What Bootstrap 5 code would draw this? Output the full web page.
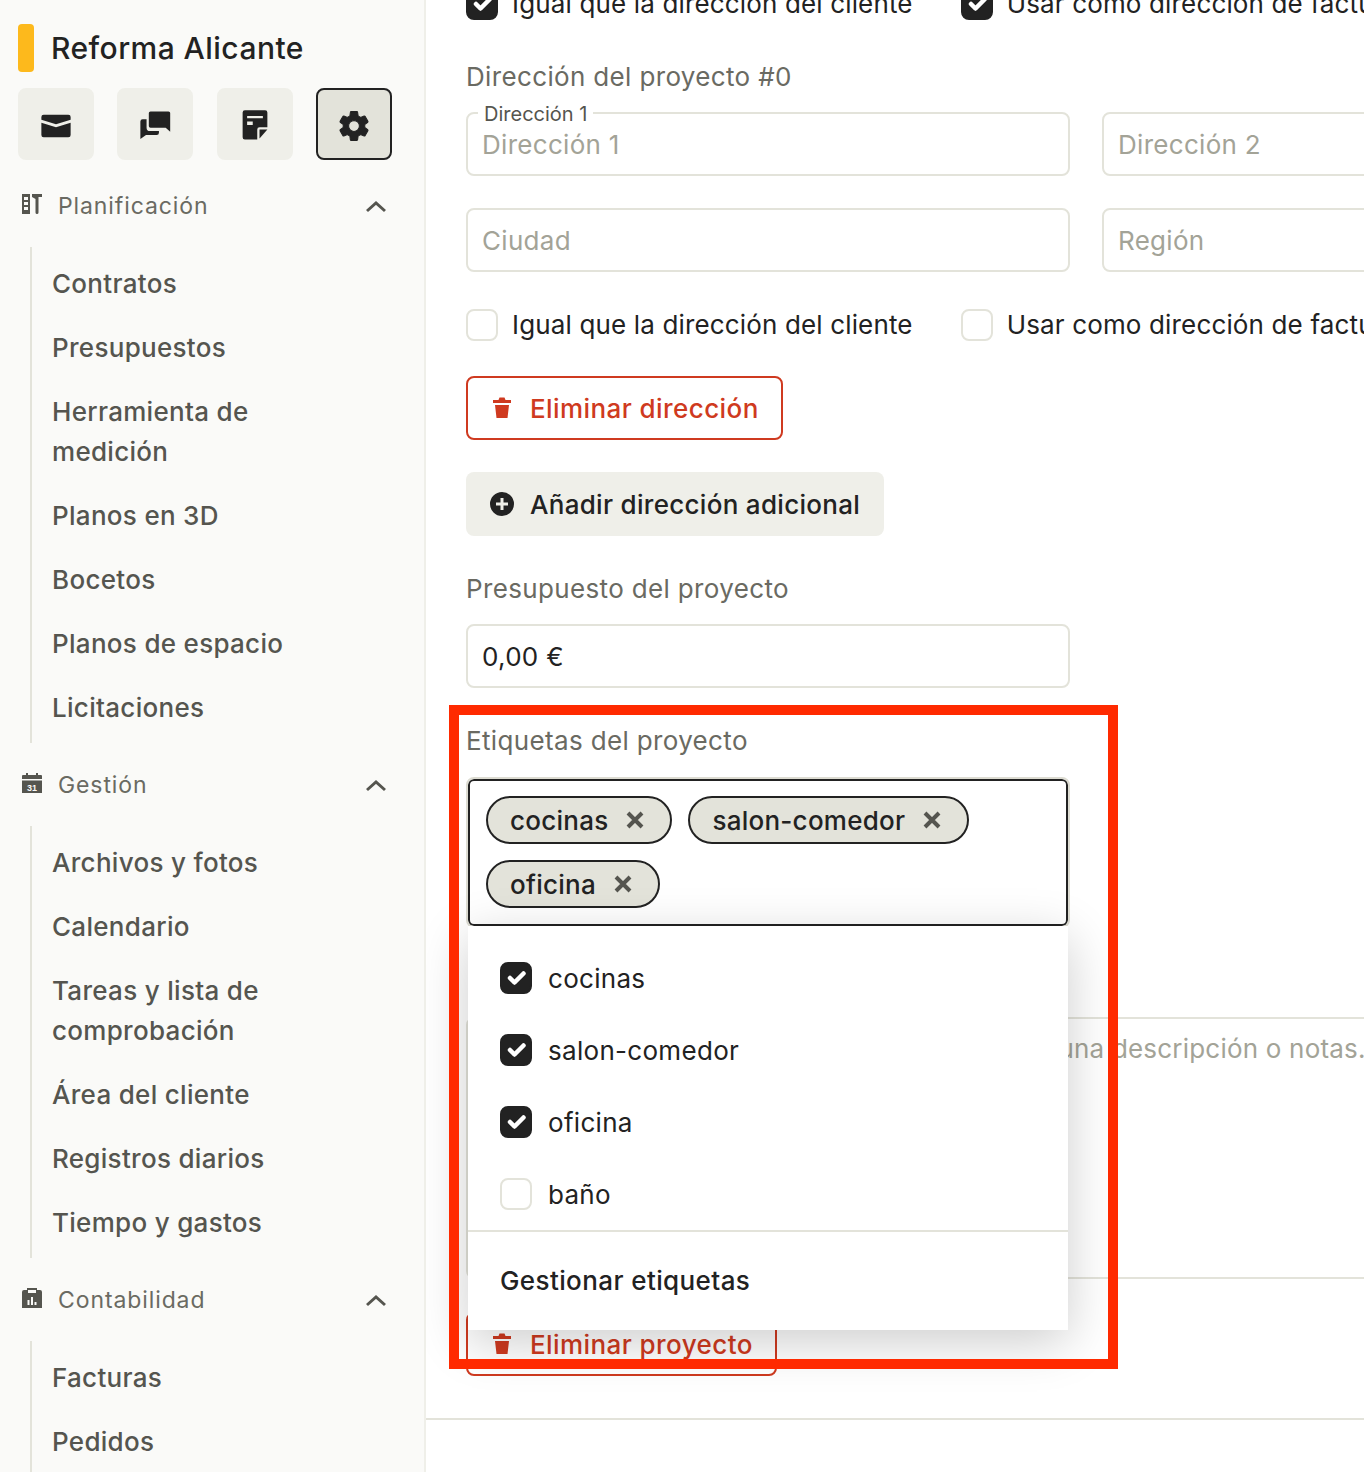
<!doctype html>
<html lang="es"><head><meta charset="utf-8">
<link href="https://cdn.jsdelivr.net/npm/bootstrap@5.3.0/dist/css/bootstrap.min.css" rel="stylesheet">
<style>
html,body{height:1472px;overflow:hidden}
body{font-family:Inter,"Liberation Sans",sans-serif;color:#222;background:#fff;font-size:26px}
.shell{height:1472px;width:1364px;overflow:hidden;position:relative}
.side{width:426px;flex:none;background:#fafaf8;border-right:2px solid #efefe9;padding:24px 32px 0 18px;height:1472px;overflow:hidden}
.prj-bar{width:16px;height:48px;background:#fdb91c;border-radius:4px}
.prj-name{font-size:30px;font-weight:500;line-height:48px;margin-left:17px;letter-spacing:.45px;color:#222}
.tool-row{margin-top:16px}
.tool-btn{width:76px;height:72px;background:#efefe9;border-radius:8px;border:2px solid #efefe9;padding:3px 0 0}
.tool-btn.on{background:#e3e3da;border-color:#222}
.tool-btn svg{width:36px;height:36px;fill:#222}
.sec-head{height:83px;margin-right:-2px;color:#6a6a62;padding-left:4px}
.sec-head svg.ic{width:20px;height:20px;fill:#55554f;margin-right:16px;margin-top:-3px}
.sec-title{font-size:23px;letter-spacing:.9px;color:#6a6a62;font-weight:400;padding-top:2px}
.sec-head svg.ch{width:24px;height:24px;margin-left:auto;margin-right:6px}
.sub-list{margin:0 40px 0 12px;padding:5px 0 3px 20px;border-left:2px solid #e3e3da;list-style:none}
.sub-list li{padding:12px 0;font-size:26px;line-height:40px;font-weight:500;color:#55554f;letter-spacing:.3px}
.main{flex:1;min-width:0;position:relative;overflow:hidden;height:1472px}
.inner{width:1240px;margin:-12px 0 0 40px}
.two{display:grid;grid-template-columns:604px 604px;column-gap:32px}
.chk-row{display:flex;gap:48px;height:32px}
.chk{display:flex;align-items:center;gap:14px;font-size:26px;letter-spacing:.15px;line-height:32px;white-space:nowrap}
.form-check-input.box{width:32px;height:32px;margin:0;border:2px solid #e3e3da;border-radius:8px;flex:none;background-size:30px}
.form-check-input.box:checked{background-color:#222;border-color:#222}
.fld-title{font-size:26px;letter-spacing:.35px;line-height:40px;color:#6a6a62;margin:0}
.form-control.fld{height:64px;font-size:26px;letter-spacing:.3px;border:2px solid #e3e3da;border-radius:8px;padding:0 14px;color:#222;background:#fff}
.form-control.fld::placeholder,.notes::placeholder{color:#a3a397;opacity:1}
.fld-wrap{position:relative}
.fld-float{position:absolute;left:12px;top:-9px;background:#fff;padding:0 6px;font-size:20px;line-height:22px;color:#55554f;z-index:2}
.btn.btn-del{height:64px;border:2px solid #cf3a20;border-radius:8px;color:#cf3a20;background:#fff;font-size:26px;letter-spacing:.42px;font-weight:500;padding:0 22px;display:flex;align-items:center;gap:16px}
.btn.btn-add{height:64px;border:0;border-radius:8px;color:#222;background:#efefe9;font-size:26px;letter-spacing:.3px;font-weight:500;padding:0 24px;display:flex;align-items:center;gap:16px}
.btn svg{width:24px;height:24px;fill:currentColor;flex:none}
.tag-area{width:604px;height:151px;border:2px solid #dddcd2;border-radius:8px;box-shadow:inset 0 0 0 2px #222;padding:17px 18px;display:flex;flex-wrap:wrap;align-content:flex-start;gap:16px;background:#fff}
.tag{height:48px;border:2px solid #222;border-radius:24px;background:#e3e3da;padding:0 26px 0 22px;font-size:26px;letter-spacing:.25px;font-weight:500;display:flex;align-items:center;gap:18px;color:#222}
.tag svg{width:18px;height:18px;stroke:#55554f;stroke-width:4;fill:none}
.notes{display:block;width:1240px;height:262px;margin-top:89px;border:2px solid #e3e3da;border-radius:8px;font-size:26px;letter-spacing:.2px;padding:10px 14px;resize:none;color:#222;outline:0}
.menu-pop{position:absolute;left:42px;top:926px;width:600px;height:404px;background:#fff;box-shadow:0 12px 48px rgba(0,0,0,.2);padding-top:16px;z-index:5}
.pop-item{height:72px;padding-left:32px;display:flex;align-items:center;gap:16px;font-size:26px;letter-spacing:.3px;color:#222}
.pop-foot{border-top:2px solid #e3e3da;height:98px;padding-left:32px;display:flex;align-items:center;font-size:26px;letter-spacing:.4px;font-weight:500;color:#222}
.anno{position:absolute;left:449px;top:705px;width:669px;height:664px;border:10px solid #ff2a00;z-index:9;pointer-events:none}
.rule{border-top:2px solid #e3e3da;position:absolute;left:0;right:0;top:1418px}
</style></head><body>
<div class="shell d-flex">
<aside class="side">
  <div class="d-flex align-items-center"><div class="prj-bar"></div><div class="prj-name">Reforma Alicante</div></div>
  <div class="tool-row d-flex justify-content-between">
    <button class="tool-btn d-flex align-items-center justify-content-center" aria-label="Correo"><svg viewBox="0 0 32 32"><path d="M5 6h22a2 2 0 0 1 2 2v2.500l-13 4-13-4V8a2 2 0 0 1 2-2zM3 13l13 4 13-4v11a2 2 0 0 1-2 2H5a2 2 0 0 1-2-2z"/></svg></button>
    <button class="tool-btn d-flex align-items-center justify-content-center" aria-label="Mensajes"><svg viewBox="0 0 32 32"><path d="M12 3h16a1.500 1.500 0 0 1 1.500 1.500V21l-4-3.500H12A1.500 1.500 0 0 1 10.500 16V4.500A1.500 1.500 0 0 1 12 3z"/><path d="M8.500 10v7.500a3 3 0 0 0 3 3h8V22a2 2 0 0 1-2 2H8l-5 3.500V12a2 2 0 0 1 2-2z"/></svg></button>
    <button class="tool-btn d-flex align-items-center justify-content-center" aria-label="Notas"><svg viewBox="0 0 32 32"><path fill-rule="evenodd" d="M7 2h18a2 2 0 0 1 2 2v13h-7a2 2 0 0 0-2 2v9H7a2 2 0 0 1-2-2V4a2 2 0 0 1 2-2zm2 5v2h14V7zm0 5v3h5v-3z"/><path d="M20 19h7l-7 8z"/></svg></button>
    <button class="tool-btn on d-flex align-items-center justify-content-center" aria-label="Ajustes"><svg viewBox="0 0 24 24" stroke="#222" stroke-width=".7"><path d="M19.140 12.940c.04-.3.06-.61.06-.94 0-.32-.02-.64-.07-.94l2.030-1.580a.49.49 0 0 0 .12-.61l-1.920-3.320a.488.488 0 0 0-.59-.22l-2.390.96c-.5-.38-1.030-.7-1.620-.94l-.36-2.540a.484.484 0 0 0-.48-.41h-3.840c-.24 0-.43.17-.47.41l-.36 2.540c-.59.24-1.130.57-1.620.94l-2.390-.96c-.22-.08-.47 0-.59.22L2.740 8.870c-.12.21-.08.47.12.61l2.030 1.580c-.05.3-.09.63-.09.94s.02.64.07.94l-2.030 1.580a.49.49 0 0 0-.12.61l1.920 3.320c.12.22.37.29.59.22l2.390-.96c.5.38 1.030.7 1.620.94l.36 2.540c.05.24.24.41.48.41h3.840c.24 0 .44-.17.47-.41l.36-2.540c.59-.24 1.130-.56 1.620-.94l2.390.96c.22.08.47 0 .59-.22l1.920-3.320c.12-.22.07-.47-.12-.61l-2.010-1.580zM12 15.600c-1.980 0-3.600-1.620-3.600-3.600s1.620-3.600 3.600-3.600 3.600 1.620 3.600 3.600-1.620 3.600-3.600 3.600z"/></svg></button>
  </div>
  <div style="height:4px"></div>
  <div class="sec-head d-flex align-items-center"><svg class="ic" viewBox="0 0 20 20"><path d="M0 0h8v20H0zM2 3v3h4V3zm0 5v3h4V8zm0 5v3h4v-3zM10 0h10v3h-3.500v15.500a1.500 1.500 0 0 1-3 0V5L10 3z"/></svg><span class="sec-title">Planificación</span><svg class="ch" viewBox="0 0 24 24"><path d="M3 17l9-8 9 8" fill="none" stroke="#55554f" stroke-width="3"/></svg></div>
  <ul class="sub-list"><li>Contratos</li><li>Presupuestos</li><li>Herramienta de medición</li><li>Planos en 3D</li><li>Bocetos</li><li>Planos de espacio</li><li>Licitaciones</li></ul>
  <div class="sec-head d-flex align-items-center"><svg class="ic" viewBox="0 0 20 20"><path d="M4 0h2v2h8V0h2v2h3a1 1 0 0 1 1 1v3H0V3a1 1 0 0 1 1-1h3zM0 7.500h20V20H0z"/><text x="10" y="17.500" text-anchor="middle" font-size="9" font-weight="700" fill="#fafaf8" font-family="Liberation Sans, sans-serif">31</text></svg><span class="sec-title">Gestión</span><svg class="ch" viewBox="0 0 24 24"><path d="M3 17l9-8 9 8" fill="none" stroke="#55554f" stroke-width="3"/></svg></div>
  <ul class="sub-list"><li>Archivos y fotos</li><li>Calendario</li><li>Tareas y lista de comprobación</li><li>Área del cliente</li><li>Registros diarios</li><li>Tiempo y gastos</li></ul>
  <div class="sec-head d-flex align-items-center"><svg class="ic" viewBox="0 0 20 20"><path fill-rule="evenodd" d="M5 0h10v2h3a2 2 0 0 1 2 2v16H0V4a2 2 0 0 1 2-2h3zm1 2v3h8V2zM5.500 12v5h2v-5zm3.500-3v8h2V9zm3.500 5v3h2v-3z"/></svg><span class="sec-title">Contabilidad</span><svg class="ch" viewBox="0 0 24 24"><path d="M3 17l9-8 9 8" fill="none" stroke="#55554f" stroke-width="3"/></svg></div>
  <ul class="sub-list"><li>Facturas</li><li>Pedidos</li></ul>
</aside>
<main class="main">
 <div class="inner">
  <div class="two chk-row">
    <label class="chk"><input class="form-check-input box" type="checkbox" checked>Igual que la dirección del cliente</label>
    <label class="chk"><input class="form-check-input box" type="checkbox" checked>Usar como dirección de facturación</label>
  </div>
  <p class="fld-title" style="margin-top:37px;margin-bottom:15px">Dirección del proyecto #0</p>
  <div class="two">
    <div class="fld-wrap"><span class="fld-float">Dirección 1</span><input class="form-control fld" placeholder="Dirección 1"></div>
    <input class="form-control fld" placeholder="Dirección 2">
  </div>
  <div class="two" style="margin-top:32px">
    <input class="form-control fld" placeholder="Ciudad">
    <input class="form-control fld" placeholder="Región">
  </div>
  <div class="two chk-row" style="margin-top:37px">
    <label class="chk"><input class="form-check-input box" type="checkbox">Igual que la dirección del cliente</label>
    <label class="chk"><input class="form-check-input box" type="checkbox">Usar como dirección de facturación</label>
  </div>
  <div class="d-flex" style="margin-top:35px"><button class="btn btn-del"><svg viewBox="0 0 24 24"><path d="M9.500 1.500h5l1 2.500H21v3H3V4h5.500zM5 9h14l-1.500 13h-11z"/></svg>Eliminar dirección</button></div>
  <div class="d-flex" style="margin-top:32px"><button class="btn btn-add"><svg viewBox="0 0 24 24"><path fill-rule="evenodd" d="M12 0a12 12 0 1 1 0 24 12 12 0 0 1 0-24zm-1.500 6v4.500H6v3h4.500V18h3v-4.500H18v-3h-4.500V6z"/></svg>Añadir dirección adicional</button></div>
  <p class="fld-title" style="margin-top:33px;margin-bottom:15px">Presupuesto del proyecto</p>
  <input class="form-control fld" style="width:604px" value="0,00 €">
  <p class="fld-title" style="margin-top:33px;margin-bottom:16px">Etiquetas del proyecto</p>
  <div class="tag-area">
    <span class="tag">cocinas<svg viewBox="0 0 18 18"><path d="M2 2l14 14M16 2L2 16"/></svg></span>
    <span class="tag">salon-comedor<svg viewBox="0 0 18 18"><path d="M2 2l14 14M16 2L2 16"/></svg></span>
    <span class="tag">oficina<svg viewBox="0 0 18 18"><path d="M2 2l14 14M16 2L2 16"/></svg></span>
  </div>
  <textarea class="notes" aria-label="Notas del proyecto" placeholder="Añade los detalles de tu proyecto con más de una descripción o notas."></textarea>
  <div class="d-flex" style="margin-top:33px"><button class="btn btn-del"><svg viewBox="0 0 24 24"><path d="M9.500 1.500h5l1 2.500H21v3H3V4h5.500zM5 9h14l-1.500 13h-11z"/></svg>Eliminar proyecto</button></div>
 </div>
 <div class="menu-pop">
   <label class="pop-item"><input class="form-check-input box" type="checkbox" checked>cocinas</label>
   <label class="pop-item"><input class="form-check-input box" type="checkbox" checked>salon-comedor</label>
   <label class="pop-item"><input class="form-check-input box" type="checkbox" checked>oficina</label>
   <label class="pop-item"><input class="form-check-input box" type="checkbox">baño</label>
   <div class="pop-foot">Gestionar etiquetas</div>
 </div>
 <div class="rule"></div>
</main>
<div class="anno"></div>
</div>
<script src="https://cdn.jsdelivr.net/npm/bootstrap@5.3.0/dist/js/bootstrap.bundle.min.js"></script>
</body></html>
